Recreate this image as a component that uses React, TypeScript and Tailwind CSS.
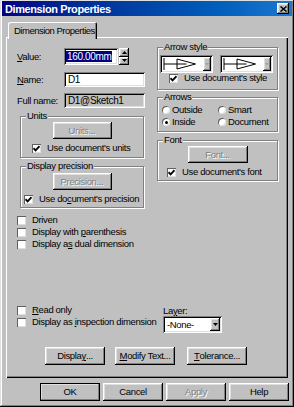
import React from 'react';

// win9x style bevels
const raised = 'shadow-[inset_-1px_-1px_#000,inset_1px_1px_#fff,inset_-2px_-2px_#808080,inset_2px_2px_#dfdfdf]';
const sunken = 'shadow-[inset_1px_1px_#808080,inset_-1px_-1px_#fff,inset_2px_2px_#000,inset_-2px_-2px_#dfdfdf]';
const etched = 'border border-[#808080] shadow-[inset_1px_1px_#fff,1px_1px_#fff]';
const dimText = 'text-[#808080] [text-shadow:1px_1px_#fff]';

const U: React.FC<{ children: React.ReactNode }> = ({ children }) => <span className="underline underline-offset-1">{children}</span>;

const CheckBox: React.FC<{ checked?: boolean; children: React.ReactNode; className?: string }> = ({ checked, children, className }) => (
  <div className={`flex items-center h-[12px] ${className || ''}`}>
    <span className="w-[9px] h-[9px] shrink-0 bg-white shadow-[inset_1px_1px_#606060,inset_-1px_-1px_#dfdfdf] flex items-center justify-center">
      {checked && (
        <svg width="7" height="7" viewBox="0 0 7 7">
          <path d="M0.5 3.2 L2.6 5.4 L6.5 1.2" fill="none" stroke="#000" strokeWidth="1.8" />
        </svg>
      )}
    </span>
    <span className="ml-[6px] whitespace-nowrap">{children}</span>
  </div>
);

const Radio: React.FC<{ checked?: boolean; children: React.ReactNode; className?: string }> = ({ checked, children, className }) => (
  <div className={`flex items-center h-[12px] ${className || ''}`}>
    <span className="w-[8px] h-[8px] shrink-0 rounded-full bg-white shadow-[inset_1px_1px_#606060,inset_-1px_-1px_#dfdfdf] flex items-center justify-center">
      {checked && <span className="w-[3px] h-[3px] rounded-full bg-black" />}
    </span>
    <span className="ml-[2px] whitespace-nowrap">{children}</span>
  </div>
);

const Button: React.FC<{ children: React.ReactNode; disabled?: boolean; className?: string }> = ({ children, disabled, className }) => (
  <div className={`bg-[#c0c0c0] ${raised} flex items-center justify-center ${disabled ? dimText : ''} ${className || ''}`}>{children}</div>
);

const Group: React.FC<{ label: string; className?: string; children: React.ReactNode }> = ({ label, className, children }) => (
  <div className={`relative ${etched} ${className || ''}`}>
    <span className="absolute -top-[7px] left-[5px] px-[1px] bg-[#c0c0c0] leading-[12px]">{label}</span>
    {children}
  </div>
);

const ArrowCombo: React.FC = () => (
  <div className={`w-[53px] h-[18px] bg-white ${sunken} flex p-[2px]`}>
    <svg className="flex-1 h-full" viewBox="0 0 40 14">
      <path d="M1.5 1 V13 M1.5 7 H24" stroke="#000" strokeWidth="1" fill="none" />
      <path d="M14.5 2 L33 7 L14.5 12 Z" stroke="#000" strokeWidth="1" fill="none" />
    </svg>
    <div className={`w-[8px] h-full bg-[#c0c0c0] ${raised} flex items-center justify-center`}>
      <svg width="4" height="3" viewBox="0 0 4 3"><path d="M0 0 H4 L2 2.5 Z" fill="#a0a0a0" /></svg>
    </div>
  </div>
);

const App: React.FC = () => {
  return (
    <div className="w-[294px] h-[407px] bg-[#c0c0c0] text-black text-[9.5px] leading-[12px] tracking-[-0.35px] font-['Liberation_Sans',Arial,sans-serif] px-[2px] pt-[1px] shadow-[inset_-1px_-1px_#000,inset_1px_1px_#dfdfdf,inset_-2px_-2px_#808080,inset_2px_2px_#fff] overflow-hidden">
      {/* Title bar */}
      <div className="h-[15px] bg-linear-to-r from-[#000080] to-[#1a78d0] flex items-center pl-[3px] pr-[3px]">
        <span className="text-white font-bold text-[11px] tracking-[-0.4px] flex-1">Dimension Properties</span>
        <div className={`w-[12px] h-[11px] bg-[#c0c0c0] ${raised} flex items-center justify-center`}>
          <svg width="7" height="6" viewBox="0 0 7 6"><path d="M0.5 0.5 L6.5 5.5 M6.5 0.5 L0.5 5.5" stroke="#000" strokeWidth="1.5" /></svg>
        </div>
      </div>

      {/* Tab */}
      <div className="mt-[6px] pl-[6px] flex">
        <div className="relative z-10 w-[89px] h-[17px] -mb-[2px] bg-[#c0c0c0] rounded-t-[2px] shadow-[inset_1px_1px_#fff,inset_-1px_0_#000,inset_-2px_0_#808080] pl-[6px] pt-[3px] whitespace-nowrap tracking-[-0.5px]">
          Dimension Properties
        </div>
      </div>

      {/* Tab panel */}
      <div className="ml-[4px] w-[282px] h-[341px] shadow-[inset_1px_1px_#fff,inset_-1px_-1px_#000,inset_-2px_-2px_#808080] pl-[11px] pt-[10px] flex flex-col">
        <div className="flex">
          {/* left column */}
          <div className="w-[128px] pt-[1px]">
            <div className="flex items-center h-[17px]">
              <span className="w-[47px]"><U>V</U>alue:</span>
              <div className={`w-[54px] h-[17px] bg-white ${sunken} flex items-center pl-[2px]`}>
                <span className="bg-[#000080] text-white text-[10px] leading-[11px] px-[1px]">160.00mm</span>
              </div>
              <div className="ml-[1px] w-[10px] h-[17px] flex flex-col">
                <div className={`h-[8.5px] bg-[#c0c0c0] ${raised} flex items-center justify-center`}>
                  <svg width="5" height="3" viewBox="0 0 5 3"><path d="M2.5 0 L5 3 H0 Z" fill="#000" /></svg>
                </div>
                <div className={`h-[8.5px] bg-[#c0c0c0] ${raised} flex items-center justify-center`}>
                  <svg width="5" height="3" viewBox="0 0 5 3"><path d="M0 0 H5 L2.5 3 Z" fill="#000" /></svg>
                </div>
              </div>
            </div>
            <div className="flex items-center h-[15px] mt-[7px]">
              <span className="w-[47px]"><U>N</U>ame:</span>
              <div className={`w-[81px] h-[15px] bg-white ${sunken} flex items-center pl-[4px] text-[10px]`}>D1</div>
            </div>
            <div className="flex items-center h-[15px] mt-[6px]">
              <span className="w-[47px]">Full name:</span>
              <div className={`w-[81px] h-[15px] bg-[#c0c0c0] ${sunken} flex items-center pl-[4px] text-[10px]`}>D1@Sketch1</div>
            </div>

            <Group label="Units" className="mt-[8px] ml-[3px] w-[124px] h-[42px]">
              <div className="flex flex-col items-center pt-[5px]">
                <Button disabled className="w-[59px] h-[17px]">Units...</Button>
              </div>
              <CheckBox checked className="ml-[11px] mt-[3px]">Use document's units</CheckBox>
            </Group>

            <Group label="Display precision" className="mt-[8px] ml-[3px] w-[124px] h-[42px]">
              <div className="flex flex-col items-center pt-[6px]">
                <Button disabled className="w-[59px] h-[17px]">Precision...</Button>
              </div>
              <CheckBox checked className="ml-[3px] mt-[3px]">Use do<U>c</U>ument's precision</CheckBox>
            </Group>
          </div>

          {/* right column */}
          <div className="ml-[12px] w-[121px]">
            <Group label="Arrow style" className="h-[43px]">
              <div className="flex pl-[2px] pt-[7px] gap-[7px]">
                <ArrowCombo />
                <ArrowCombo />
              </div>
              <CheckBox checked className="ml-[11px] mt-[-1px]">Use document's style</CheckBox>
            </Group>

            <Group label="Arrows" className="mt-[7px] h-[35px]">
              <div className="grid grid-cols-[56px_1fr] pl-[4px] pt-[6px]">
                <Radio>Outside</Radio>
                <Radio>Smart</Radio>
                <Radio checked>Inside</Radio>
                <Radio>Document</Radio>
              </div>
            </Group>

            <Group label="Font" className="mt-[8px] h-[41px]">
              <div className="flex flex-col items-center pt-[5px]">
                <Button disabled className="w-[60px] h-[17px]">Font...</Button>
              </div>
              <CheckBox checked className="ml-[9px] mt-[3px]">Use document's font</CheckBox>
            </Group>
          </div>
        </div>

        <div className="mt-[6px]">
          <CheckBox>Driven</CheckBox>
          <CheckBox>Display with <U>p</U>arenthesis</CheckBox>
          <CheckBox>Display a<U>s</U> dual dimension</CheckBox>
        </div>

        <div className="mt-[54px] flex">
          <div className="w-[146px]">
            <CheckBox><U>R</U>ead only</CheckBox>
            <CheckBox>Display as <U>i</U>nspection dimension</CheckBox>
          </div>
          <div className="pt-[2px]">
            <div className="h-[10px] leading-[10px]">La<U>y</U>er:</div>
            <div className={`w-[59px] h-[17px] bg-white ${sunken} flex items-center p-[2px]`}>
              <span className="flex-1 pl-[2px]">-None-</span>
              <div className={`w-[10px] h-full bg-[#c0c0c0] ${raised} flex items-center justify-center`}>
                <svg width="5" height="3" viewBox="0 0 5 3"><path d="M0 0 H5 L2.5 3 Z" fill="#000" /></svg>
              </div>
            </div>
          </div>
        </div>

        <div className="mt-[14px] flex">
          <Button className="ml-[28px] w-[60px] h-[18px]">Displa<U>y</U>...</Button>
          <Button className="ml-[10px] w-[60px] h-[18px]"><U>M</U>odify Text...</Button>
          <Button className="ml-[12px] w-[60px] h-[18px]"><U>T</U>olerance...</Button>
        </div>
      </div>

      {/* dialog buttons */}
      <div className="mt-[5px] flex justify-end gap-[3px] pr-[3px]">
        <Button className="w-[60px] h-[18px] outline outline-1 outline-black -outline-offset-1">OK</Button>
        <Button className="w-[60px] h-[18px]">Cancel</Button>
        <Button disabled className="w-[60px] h-[18px]">Apply</Button>
        <Button className="w-[60px] h-[18px]">Help</Button>
      </div>
    </div>
  );
};

export default App;
